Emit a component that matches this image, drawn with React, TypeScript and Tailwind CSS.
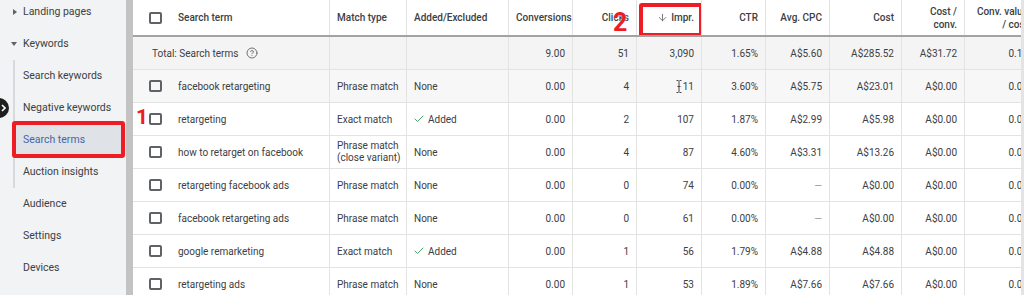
import React from "react";
import { CircleHelp, Check, ArrowDown } from "lucide-react";

type Col = { w: string; align: "left" | "right"; line: boolean };

const cols: Col[] = [
  { w: "w-[32px]", align: "left", line: false },
  { w: "w-[165px]", align: "left", line: true },
  { w: "w-[77px]", align: "left", line: true },
  { w: "w-[102px]", align: "left", line: true },
  { w: "w-[64px]", align: "right", line: true },
  { w: "w-[64px]", align: "right", line: true },
  { w: "w-[65px]", align: "right", line: true },
  { w: "w-[64px]", align: "right", line: true },
  { w: "w-[64px]", align: "right", line: true },
  { w: "w-[72px]", align: "right", line: true },
  { w: "w-[63px]", align: "right", line: true },
  { w: "w-[70px]", align: "right", line: false },
];

const rows = [
  ["facebook retargeting", "Phrase match", "None", "0.00", "4", "CURSOR", "3.60%", "A$5.75", "A$23.01", "A$0.00", "0.00"],
  ["retargeting", "Exact match", "ADDED", "0.00", "2", "107", "1.87%", "A$2.99", "A$5.98", "A$0.00", "0.00"],
  ["how to retarget on facebook", "VARIANT", "None", "0.00", "4", "87", "4.60%", "A$3.31", "A$13.26", "A$0.00", "0.00"],
  ["retargeting facebook ads", "Phrase match", "None", "0.00", "0", "74", "0.00%", "—", "A$0.00", "A$0.00", "0.00"],
  ["facebook retargeting ads", "Phrase match", "None", "0.00", "0", "61", "0.00%", "—", "A$0.00", "A$0.00", "0.00"],
  ["google remarketing", "Exact match", "ADDED", "0.00", "1", "56", "1.79%", "A$4.88", "A$4.88", "A$0.00", "0.00"],
  ["retargeting ads", "Phrase match", "None", "0.00", "1", "53", "1.89%", "A$7.66", "A$7.66", "A$0.00", "0.00"],
];

const Box = () => (
  <div className="w-[13px] h-[12px] shrink-0 border-2 border-[#5f6368] rounded-[2px]" />
);

const Cell = ({ i, children, className = "" }: { i: number; children?: React.ReactNode; className?: string }) => {
  const c = cols[i];
  return (
    <div
      className={`${c.w} shrink-0 h-full flex items-center overflow-hidden ${c.line ? "border-r border-[#e3e3e3]" : ""} ${
        c.align === "right" ? "justify-end pr-[7px] pl-[7px] text-right" : "pl-[7px] pr-[4px]"
      } ${className}`}
    >
      {children}
    </div>
  );
};

const renderValue = (v: string) => {
  if (v === "ADDED")
    return (
      <span className="flex items-center gap-[3px] -ml-[1px]">
        <Check size={12} strokeWidth={1.8} className="text-[#3a9a5b]" />
        Added
      </span>
    );
  if (v === "VARIANT")
    return (
      <span className="leading-[12px] whitespace-nowrap">
        Phrase match
        <br />
        (close variant)
      </span>
    );
  if (v === "CURSOR")
    return (
      <span className="flex items-center">
        <svg width="6" height="13" viewBox="0 0 6 13" className="mr-[1px]">
          <path d="M0.5 0.5h2M3.5 0.5h2M3 1v11M0.5 12.5h2M3.5 12.5h2M1.5 6.5h3" stroke="#444" strokeWidth="1" fill="none" />
        </svg>
        11
      </span>
    );
  if (v === "—") return <span className="text-[#9aa0a6]">—</span>;
  return <span className="whitespace-nowrap">{v}</span>;
};

const Sidebar = () => {
  const sub = ["Search keywords", "Negative keywords", "Search terms", "Auction insights"];
  return (
    <div className="relative w-[126px] shrink-0 h-full bg-[#f1f3f4] text-[10.5px] text-[#3c4043]">
      <div className="-mt-[4px]">
        <div className="h-[32px] flex items-center pl-[13px]">
          <svg width="4" height="6" viewBox="0 0 4 6" className="mr-[6px]">
            <path d="M0 0l4 3-4 3z" fill="#5f6368" />
          </svg>
          Landing pages
        </div>
        <div className="h-[32px] flex items-center pl-[11px]">
          <svg width="6" height="4" viewBox="0 0 6 4" className="mr-[6px]">
            <path d="M0 0h6L3 4z" fill="#5f6368" />
          </svg>
          Keywords
        </div>
        <div className="ml-[13px] border-l-2 border-[#d7d9dc]">
          {sub.map((s) =>
            s === "Search terms" ? (
              <div key={s} className="relative h-[32px] flex items-center pl-[8px] bg-[#dfe2e7] text-[#4666a6]">
                {s}
                <div className="absolute -top-[3px] -bottom-[2px] -left-[3px] right-[1px] border-4 border-[#ee1c25] rounded-[3px]" />
              </div>
            ) : (
              <div key={s} className="h-[32px] flex items-center pl-[8px]">
                {s}
              </div>
            )
          )}
        </div>
        {["Audience", "Settings", "Devices"].map((s) => (
          <div key={s} className="h-[32px] flex items-center pl-[23px]">
            {s}
          </div>
        ))}
      </div>
      <div className="absolute -left-[11px] top-[98px] w-[20px] h-[20px] rounded-full bg-[#1f1f1f] flex items-center justify-end pr-[3px]">
        <svg width="5" height="8" viewBox="0 0 5 8">
          <path d="M1 1l3 3-3 3" stroke="#fff" strokeWidth="1.6" fill="none" />
        </svg>
      </div>
    </div>
  );
};

export default function App() {
  return (
    <div
      className="relative w-[1024px] h-[295px] overflow-hidden flex bg-white"
      style={{ fontFamily: "Roboto, 'Liberation Sans', sans-serif" }}
    >
      <Sidebar />
      <div className="w-[7px] shrink-0 h-full bg-[#c3c3c3]" />
      <div className="flex-1 min-w-0 overflow-hidden text-[10px] text-[#3c4043]">
        {/* header */}
        <div className="flex h-[37px] border-b-2 border-[#a3a3a3] font-medium">
          <Cell i={0} className="!pl-[16px] !pr-0">
            <Box />
          </Cell>
          <Cell i={1} className="pl-[13px]">Search term</Cell>
          <Cell i={2}>Match type</Cell>
          <Cell i={3}>Added/Excluded</Cell>
          <Cell i={4} className="!justify-start">
            <span className="whitespace-nowrap">Conversions</span>
          </Cell>
          <Cell i={5}>Clicks</Cell>
          <Cell i={6} className="relative">
            <span className="flex items-center gap-[3px] whitespace-nowrap">
              <ArrowDown size={11} strokeWidth={1.8} className="text-[#5f6368]" />
              Impr.
            </span>
            <div className="absolute left-[2px] -right-[2px] top-[3px] -bottom-[2px] border-4 border-[#ee1c25] rounded-[3px]" />
          </Cell>
          <Cell i={7}>CTR</Cell>
          <Cell i={8}>Avg. CPC</Cell>
          <Cell i={9}>Cost</Cell>
          <Cell i={10}>
            <span className="leading-[13px]">
              Cost /<br />
              conv.
            </span>
          </Cell>
          <Cell i={11}>
            <span className="leading-[13px] whitespace-nowrap">
              Conv. value
              <br />/ cost
            </span>
          </Cell>
        </div>
        {/* total */}
        <div className="flex h-[33px] bg-[#f4f4f4] border-b border-[#e3e3e3]">
          <div className="w-[197px] shrink-0 h-full flex items-center pl-[19px] gap-[8px] border-r border-[#e3e3e3]">
            Total: Search terms
            <CircleHelp size={12} strokeWidth={1.8} className="text-[#5f6368]" />
          </div>
          <Cell i={2} />
          <Cell i={3} />
          {["9.00", "51", "3,090", "1.65%", "A$5.60", "A$285.52", "A$31.72", "0.12"].map((v, k) => (
            <Cell key={k} i={k + 4}>
              {renderValue(v)}
            </Cell>
          ))}
        </div>
        {rows.map((r, ri) => (
          <div
            key={ri}
            className={`flex h-[33px] border-b border-[#e3e3e3] ${ri === 0 ? "bg-[#f7f7f7]" : "bg-white"}`}
          >
            <Cell i={0} className="!pl-[16px] !pr-0">
              <Box />
            </Cell>
            {r.map((v, k) => (
              <Cell key={k} i={k + 1} className={k === 0 ? "pl-[13px]" : ""}>
                {renderValue(v)}
              </Cell>
            ))}
          </div>
        ))}
      </div>
      <div className="w-[3px] shrink-0 h-full bg-[#e4e4e4]" />
      {/* annotations */}
      <div className="absolute left-[136px] top-[107px] text-[21px] font-bold text-[#ee1c25] leading-none [text-shadow:0_0_2px_#fff]">
        1
      </div>
      <div className="absolute left-[613px] top-[10px] text-[25px] font-bold text-[#ee1c25] leading-none [text-shadow:0_0_2px_#fff]">
        2
      </div>
    </div>
  );
}
